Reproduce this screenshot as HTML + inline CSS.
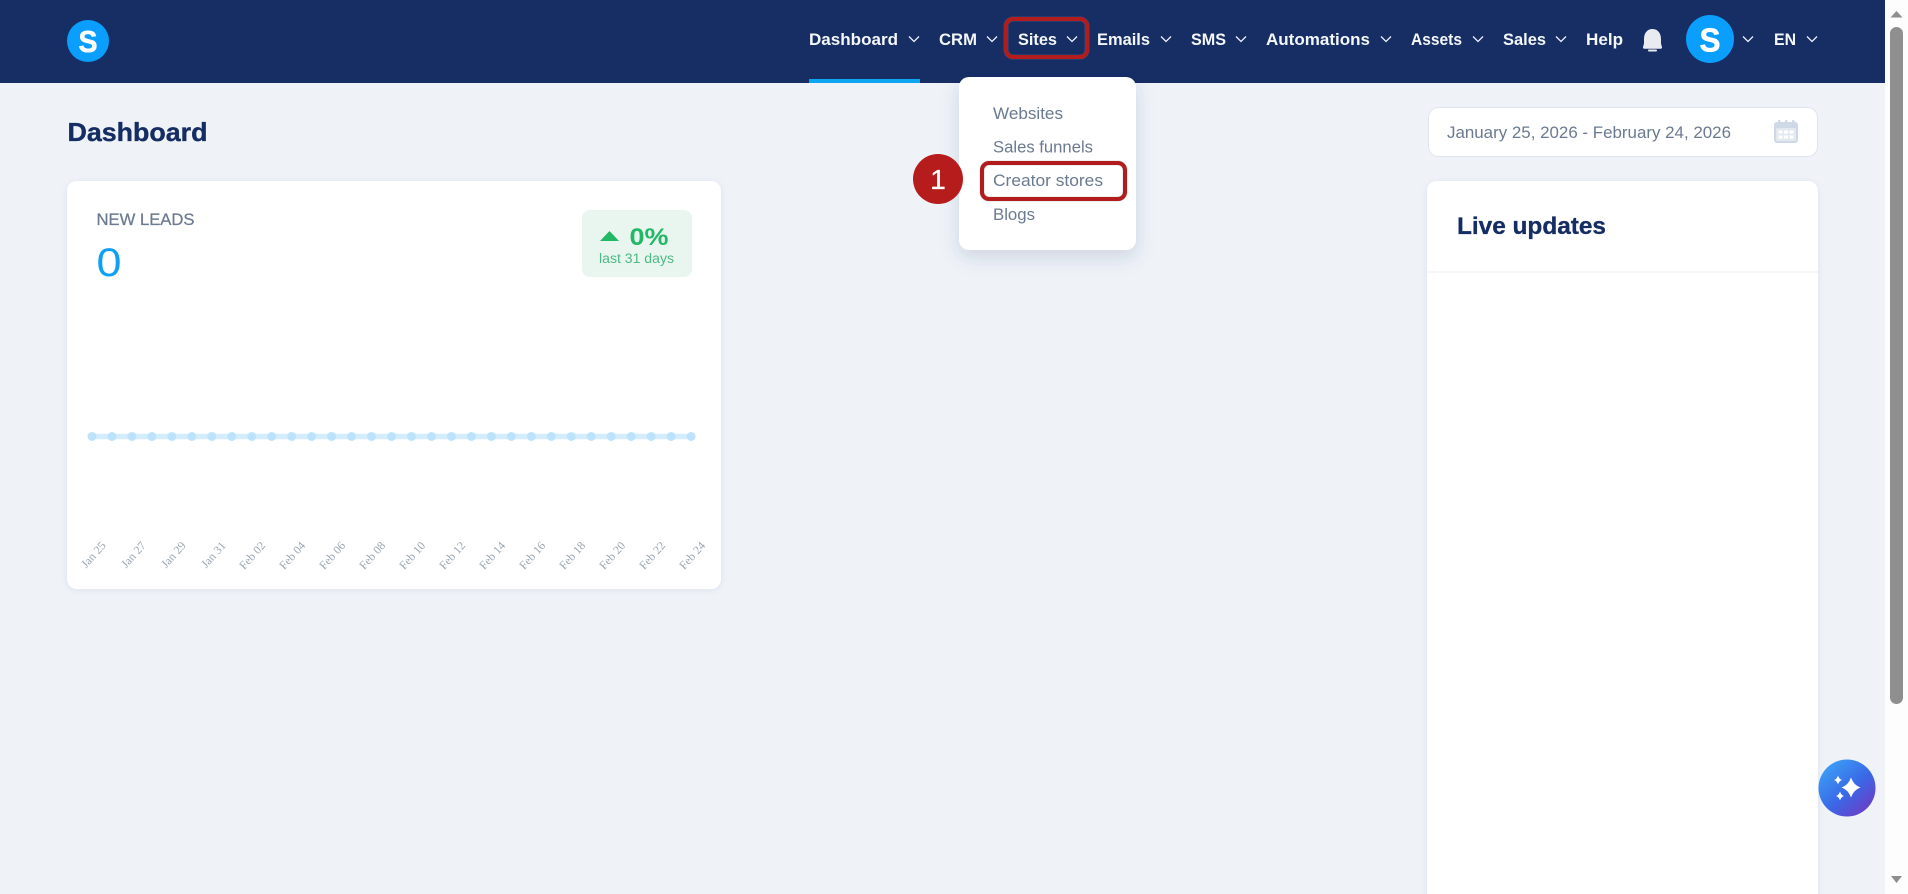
<!DOCTYPE html>
<html lang="en"><head><meta charset="utf-8"><title>Dashboard</title>
<style>
html,body{margin:0;padding:0;width:1908px;height:894px;overflow:hidden;background:#eff3f8}
svg{position:absolute;left:0;top:0;display:block}
text{font-family:"Liberation Sans",sans-serif}
.nav{font-size:16.5px;font-weight:700;fill:#f4f6f9}
.dd{font-size:17px;fill:#6b7a90}
.lb{font-family:"Liberation Serif",serif;font-size:11.8px;fill:#9aa5b1;text-anchor:end}
</style></head><body>
<svg width="1908" height="894" viewBox="0 0 1908 894" xmlns="http://www.w3.org/2000/svg">
<defs>
<filter id="cs" x="-10%" y="-10%" width="120%" height="120%"><feDropShadow dx="0" dy="1" stdDeviation="3" flood-color="#2a3f6a" flood-opacity=".09"/></filter>
<filter id="ds" x="-30%" y="-30%" width="160%" height="160%"><feDropShadow dx="0" dy="7" stdDeviation="9" flood-color="#2a3f6a" flood-opacity=".17"/></filter>
<linearGradient id="ai" x1="0.1" y1="0.1" x2="0.85" y2="0.95"><stop offset="0" stop-color="#3c9ff6"/><stop offset=".55" stop-color="#3a68e6"/><stop offset="1" stop-color="#6d3cc6"/></linearGradient>
</defs>
<rect width="1908" height="894" fill="#eff3f8"/>
<!-- scrollbar -->
<rect x="1885" width="23" height="894" fill="#fdfdfd"/>
<path d="M1896.500 11 l6 6.500 h-12 z" fill="#8e8e8e"/>
<path d="M1890 33.500 a6.500 6.500 0 0 1 13 0 V697.500 a6.500 6.500 0 0 1 -13 0 z" fill="#8f8f8f"/>
<path d="M1891 876 h11 l-5.500 7 z" fill="#8e8e8e"/>
<!-- header -->
<rect width="1885" height="83" fill="#162e64"/>
<rect x="809" y="79" width="111" height="4" fill="#0ea5f0"/>
<circle cx="88" cy="41" r="21" fill="#0a9fff"/>
<text x="78.500" y="52" font-size="31" font-weight="700" fill="#fff" stroke="#fff" stroke-width=".6" textLength="19" lengthAdjust="spacingAndGlyphs">S</text>

<text class="nav" x="809" y="45" textLength="89" lengthAdjust="spacingAndGlyphs">Dashboard</text>
<text class="nav" x="939" y="45" textLength="38" lengthAdjust="spacingAndGlyphs">CRM</text>
<text class="nav" x="1018" y="45" textLength="39" lengthAdjust="spacingAndGlyphs">Sites</text>
<text class="nav" x="1097" y="45" textLength="53" lengthAdjust="spacingAndGlyphs">Emails</text>
<text class="nav" x="1191" y="45" textLength="35" lengthAdjust="spacingAndGlyphs">SMS</text>
<text class="nav" x="1266" y="45" textLength="104" lengthAdjust="spacingAndGlyphs">Automations</text>
<text class="nav" x="1411" y="45" textLength="51" lengthAdjust="spacingAndGlyphs">Assets</text>
<text class="nav" x="1503" y="45" textLength="43" lengthAdjust="spacingAndGlyphs">Sales</text>
<text class="nav" x="1586" y="45" textLength="37" lengthAdjust="spacingAndGlyphs">Help</text>
<text class="nav" x="1774" y="45" textLength="22" lengthAdjust="spacingAndGlyphs">EN</text>
<g fill="none" stroke="#eef1f6" stroke-width="1.300">
<path d="M909 36.500l5 5 5-5"/><path d="M987 36.500l5 5 5-5"/><path d="M1067 36.500l5 5 5-5"/><path d="M1161 36.500l5 5 5-5"/><path d="M1236 36.500l5 5 5-5"/><path d="M1381 36.500l5 5 5-5"/><path d="M1473 36.500l5 5 5-5"/><path d="M1556 36.500l5 5 5-5"/><path d="M1743 36.500l5 5 5-5"/><path d="M1807 36.500l5 5 5-5"/>
</g>
<path d="M1652.500 29c-5.500 0-8.500 4.500-8.500 10v3.500c0 2.500-1 3.500-1 5 0 .8.500 1.200 1.200 1.200h16.600c.7 0 1.200-.4 1.200-1.200 0-1.500-1-2.500-1-5V39c0-5.500-3-10-8.500-10z" fill="#e8ebf0"/>
<rect x="1648" y="49.500" width="9" height="2" rx="1" fill="#e8ebf0"/>
<circle cx="1710" cy="39" r="24" fill="#0a9fff"/>
<text x="1699.500" y="51.500" font-size="33" font-weight="700" fill="#fff" stroke="#fff" stroke-width=".6" textLength="21" lengthAdjust="spacingAndGlyphs">S</text>
<rect x="1006" y="19" width="81" height="38" rx="7" fill="none" stroke="#8a8f98" stroke-opacity=".3" stroke-width="5"/>
<rect x="1006" y="19" width="81" height="38" rx="7" fill="none" stroke="#b31c1c" stroke-width="4"/>
<!-- headings -->
<text x="67.500" y="141" font-size="26" font-weight="700" fill="#152d63" stroke="#152d63" stroke-width=".35" textLength="140" lengthAdjust="spacingAndGlyphs">Dashboard</text>
<!-- leads card -->
<rect x="67" y="181" width="654" height="408" rx="10" fill="#fff" filter="url(#cs)"/>
<text x="96.500" y="225" font-size="16.500" fill="#6b7a90" stroke="#6b7a90" stroke-width=".25" textLength="98" lengthAdjust="spacingAndGlyphs">NEW LEADS</text>
<text x="96.500" y="276" font-size="40" fill="#0ea0f5" textLength="25" lengthAdjust="spacingAndGlyphs">0</text>
<rect x="582" y="210" width="110" height="67" rx="8" fill="#e8f6ef"/>
<path d="M600 241 l9.500-10 9.500 10z" fill="#22b866"/>
<text x="629.500" y="245" font-size="24" font-weight="700" fill="#22b866" textLength="39" lengthAdjust="spacingAndGlyphs">0%</text>
<text x="599" y="263" font-size="13.500" fill="#4fb985" textLength="75" lengthAdjust="spacingAndGlyphs">last 31 days</text>
<path d="M92 436.500H691.500" stroke="#d3edfc" stroke-width="5.500" fill="none"/>
<path d="M92 436.500H692" stroke="#bde3fc" stroke-width="9" stroke-linecap="round" stroke-dasharray="0 19.970" fill="none"/>
<g>
<text class="lb" transform="translate(106.500 546) rotate(-48)">Jan 25</text>
<text class="lb" transform="translate(146.500 546) rotate(-48)">Jan 27</text>
<text class="lb" transform="translate(186.500 546) rotate(-48)">Jan 29</text>
<text class="lb" transform="translate(226.500 546) rotate(-48)">Jan 31</text>
<text class="lb" transform="translate(266 546) rotate(-48)">Feb 02</text>
<text class="lb" transform="translate(306 546) rotate(-48)">Feb 04</text>
<text class="lb" transform="translate(346 546) rotate(-48)">Feb 06</text>
<text class="lb" transform="translate(386 546) rotate(-48)">Feb 08</text>
<text class="lb" transform="translate(426 546) rotate(-48)">Feb 10</text>
<text class="lb" transform="translate(466 546) rotate(-48)">Feb 12</text>
<text class="lb" transform="translate(506 546) rotate(-48)">Feb 14</text>
<text class="lb" transform="translate(546 546) rotate(-48)">Feb 16</text>
<text class="lb" transform="translate(586 546) rotate(-48)">Feb 18</text>
<text class="lb" transform="translate(626 546) rotate(-48)">Feb 20</text>
<text class="lb" transform="translate(666 546) rotate(-48)">Feb 22</text>
<text class="lb" transform="translate(706 546) rotate(-48)">Feb 24</text>
</g>
<!-- date box -->
<rect x="1428.500" y="107.500" width="389" height="49" rx="10" fill="#fff" stroke="#dfe5ee"/>
<text x="1447" y="138" font-size="16.500" fill="#6b7a90" textLength="284" lengthAdjust="spacingAndGlyphs">January 25, 2026 - February 24, 2026</text>
<rect x="1774" y="122" width="24" height="21" rx="3" fill="#cfd8e6"/>
<rect x="1778" y="120" width="2.500" height="5" rx="1" fill="#cfd8e6"/><rect x="1785" y="120" width="2.500" height="5" rx="1" fill="#cfd8e6"/><rect x="1792" y="120" width="2.500" height="5" rx="1" fill="#cfd8e6"/>
<rect x="1776" y="128" width="20" height="13" rx="1.500" fill="#e4e9f1"/>
<g fill="#fff"><rect x="1778.500" y="130.500" width="4" height="3"/><rect x="1784" y="130.500" width="4" height="3"/><rect x="1789.500" y="130.500" width="4" height="3"/><rect x="1778.500" y="135.500" width="4" height="3"/><rect x="1784" y="135.500" width="4" height="3"/><rect x="1789.500" y="135.500" width="4" height="3"/></g>
<!-- live updates -->
<rect x="1427" y="181" width="391" height="740" rx="10" fill="#fff" filter="url(#cs)"/>
<text x="1457" y="234" font-size="24" font-weight="700" fill="#152d63" stroke="#152d63" stroke-width=".3" textLength="149" lengthAdjust="spacingAndGlyphs">Live updates</text>
<rect x="1427" y="271.500" width="391" height="1" fill="#e9edf3"/>
<!-- dropdown -->
<rect x="959" y="77" width="177" height="173" rx="10" fill="#fff" filter="url(#ds)"/>
<text class="dd" x="993" y="119" textLength="70" lengthAdjust="spacingAndGlyphs">Websites</text>
<text class="dd" x="993" y="152.500" textLength="100" lengthAdjust="spacingAndGlyphs">Sales funnels</text>
<text class="dd" x="993" y="186" textLength="110" lengthAdjust="spacingAndGlyphs">Creator stores</text>
<text class="dd" x="993" y="220" textLength="42" lengthAdjust="spacingAndGlyphs">Blogs</text>
<rect x="982" y="163" width="143" height="36" rx="7" fill="none" stroke="#8a8f98" stroke-opacity=".3" stroke-width="5"/>
<rect x="982" y="163" width="143" height="36" rx="7" fill="none" stroke="#b31c1c" stroke-width="4"/>
<circle cx="938" cy="179" r="25" fill="#b71c1c"/>
<text x="938" y="189" font-size="28" fill="#fff" stroke="#fff" stroke-width=".3" text-anchor="middle">1</text>
<!-- assistant -->
<circle cx="1847" cy="788" r="28.500" fill="url(#ai)"/>
<g fill="#fff">
<path d="M1851 777.500Q1853.500 785 1860.500 787.500 1853.500 790 1851 797.500 1848.500 790 1841.500 787.500 1848.500 785 1851 777.500z"/>
<path d="M1838 775.500Q1839 779 1842 780 1839 781 1838 784.500 1837 781 1834 780 1837 779 1838 775.500z"/>
<path d="M1840 791.500Q1841 795 1844 796 1841 797 1840 800.500 1839 797 1836 796 1839 795 1840 791.500z"/>
</g>
</svg>
</body></html>
